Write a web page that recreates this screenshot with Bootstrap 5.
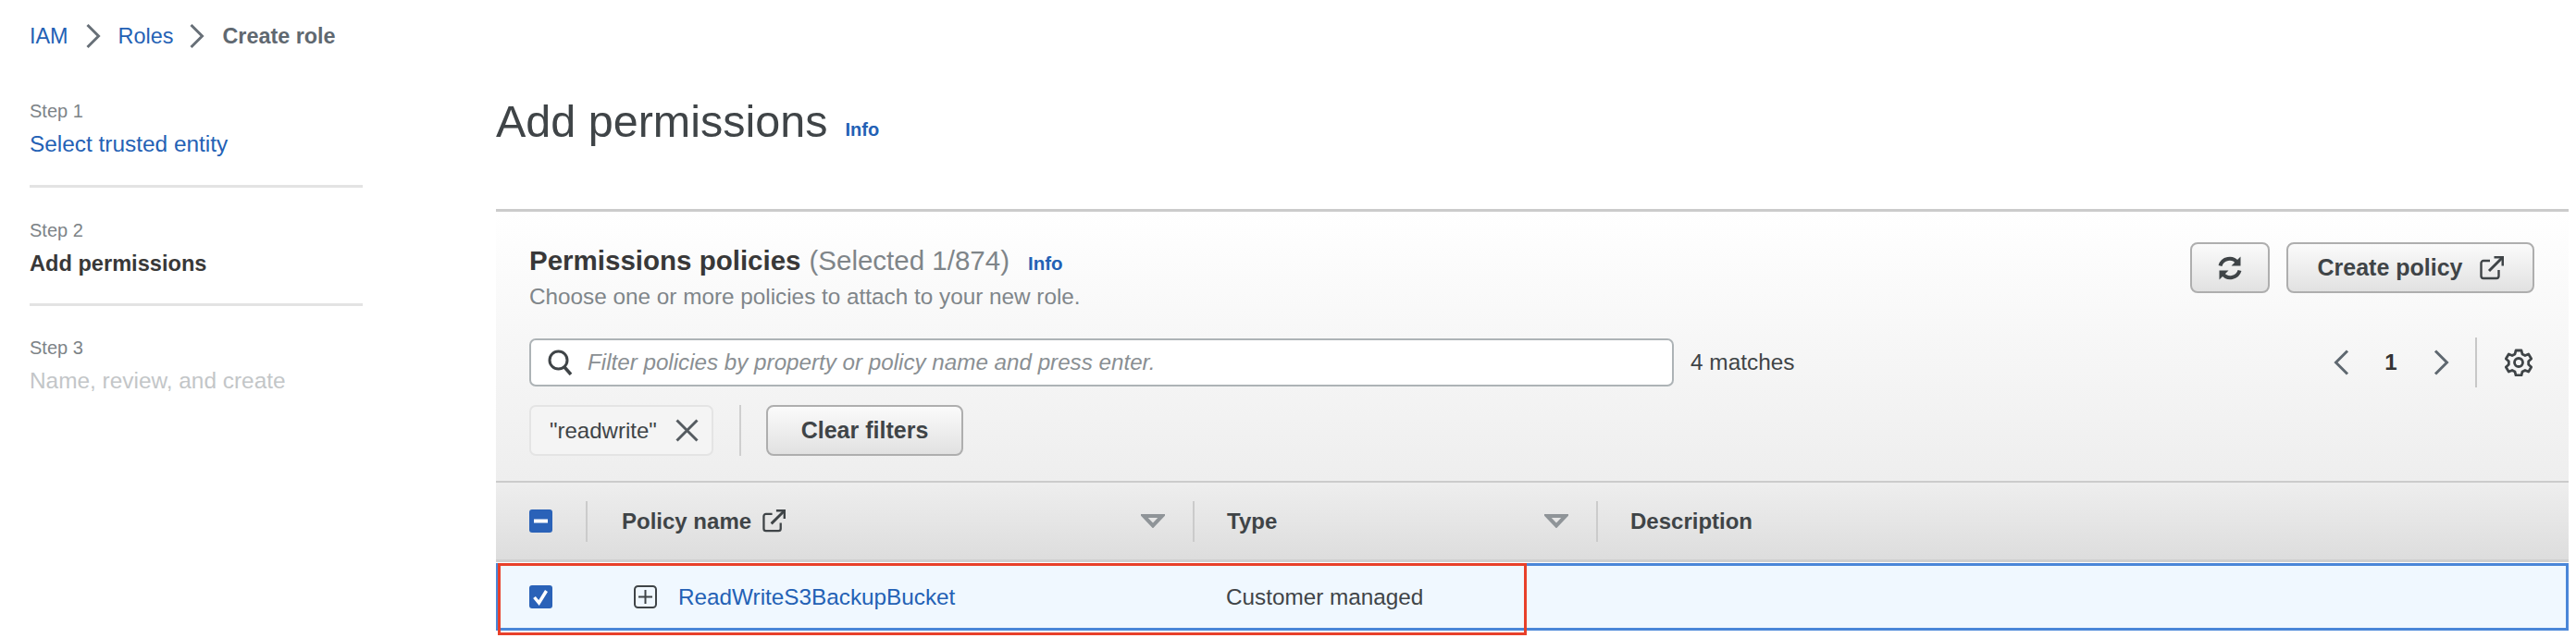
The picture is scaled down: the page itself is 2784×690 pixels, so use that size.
<!DOCTYPE html>
<html lang="en">
<head>
<meta charset="utf-8">
<title>Create role</title>
<link href="https://cdn.jsdelivr.net/npm/bootstrap@5.3.0/dist/css/bootstrap.min.css" rel="stylesheet">
<style>
html,body{height:690px;overflow:hidden}
body{background:#fff;color:#3f4447;font-family:"Liberation Sans",Arial,sans-serif;font-size:24px;line-height:32px}
a{color:#2361b5;text-decoration:none}
.crumbs{height:78px;padding:0 0 0 32px;margin:0;font-size:23.4px}
.crumbs a,.crumbs b{line-height:80px}
.crumbs b{color:#5f6870;font-weight:700;font-size:23.4px}
.chev{color:#687078;margin:0 19px}
.chev-b{margin-left:18px}
.shell{height:612px}
.sidebar{width:536px;padding-left:32px;flex:none}
.stepper{width:360px;margin:0;padding:0;list-style:none}
.stepper li{height:128px;padding-top:32px;border-bottom:3px solid #e3e3e3}
.stepper li:first-child{height:125px;padding-top:28px}
.stepper li:last-child{border:0;padding-top:31px}
.stepper small{display:block;font-size:20px;line-height:28px;color:#7d8387;margin-bottom:6px}
.stepper a,.stepper strong,.stepper .muted-step{font-size:24.4px}
.stepper strong{color:#383838;font-size:23.6px}
.muted-step{color:#c3c6c8}
.mainarea{margin-right:8px;min-width:0}
.pagehead{height:70px;gap:19px;margin-top:18px;margin-bottom:60px}
.pagehead h1{font-size:48.5px;line-height:70px;font-weight:400;margin:0;color:#3f4447}
.pagehead .infolink{margin-top:18px}
.infolink{font-size:20px;font-weight:700;color:#2361b5}
.panel{border-top:3px solid #cbcbcb;background:linear-gradient(#fff,#eee);height:294px;padding:34px 36px 0;position:relative}
.panel h2{font-size:29.5px;line-height:38px;font-weight:700;margin:0;color:#383838;display:flex;align-items:baseline}
.panel h2 span{font-weight:400;color:#7f8589;margin-left:9px}
.panel h2 a{margin-left:20px;font-size:20.5px}
.panel p{color:#80868a;margin:1px 0 0;font-size:24.3px;line-height:32px}
.topactions{position:absolute;right:37px;top:33px;gap:18px}
.greybtn{height:55px;background:linear-gradient(#fbfbfb,#e1e1e1);border:2px solid #aeaeae;border-radius:8px;color:#3f4447;font-size:25px;font-weight:700;line-height:1;padding:0;display:flex;align-items:center;justify-content:center}
.refresh{width:86px}
.createbtn{width:268px;gap:18px}
.filterrow{margin-top:29px;height:52px}
.searchbox{width:1237px;height:52px;background:#fff;border:2px solid #adb3b6;border-radius:7px;padding:0 18px;gap:16px}
.searchbox input{border:0;outline:0;background:transparent;width:100%;padding:0;font:italic 24.2px "Liberation Sans",Arial,sans-serif;color:#333}
.searchbox input::placeholder{color:#8a8f93;opacity:1}
.matchcount{margin-left:18px;color:#3f4447;font-size:24.4px}
.pager{margin-left:auto;margin-right:3px}
.pager b{width:40px;text-align:center;margin:0 26px 0 25px;font-size:24px;color:#333}
.pagerule{width:2px;height:54px;background:#c8c8c8;margin:0 30px 0 28px}
.tokenrow{margin-top:20px;height:55px}
.token{width:199px;height:55px;background:#f4f4f4;border:2px solid #e4e4e4;border-radius:7px;padding:0 14px 0 20px;justify-content:space-between}
.tokenrule{width:2px;height:55px;background:#cfcfcf;margin:0 27px 0 28px}
.clearbtn{width:213px;height:55px}
.thead{height:89px;border-top:3px solid #cbcbcb;border-bottom:3px solid #cfcfcf;background:linear-gradient(#eee,#ddd);margin-top:-1px}
.cell{height:100%;position:relative;display:flex;align-items:center}
.c1{width:97px;padding-left:36px}
.c2{width:654px;padding-left:37px}
.c3{width:434px;padding-left:35px}
.c4{padding-left:35px}
.thead .cell{font-weight:700;color:#3f4447}
.thead .c2,.thead .c3{justify-content:space-between;padding-right:30px}
.vrule{width:2px;height:44px;background:#cbcbcb;flex:none}
.titlegap{gap:12px}
.trow{height:73px;background:#f0f8ff;border:3px solid #4a86d8;border-left-width:2px;margin-top:1px;position:relative;font-size:24.3px}
.trow .c1{padding-left:34px;width:95px}
.trow .c2{width:657px;padding-left:52px;gap:23px}
.trow .c3{padding-left:35px;color:#3f4447}
.annot{position:absolute;left:0;top:-3px;width:1112px;height:78px;border:3px solid #e8402a;pointer-events:none}
svg{display:block;flex:none}
</style>
</head>
<body>
<nav class="crumbs d-flex align-items-center" aria-label="breadcrumb">
  <a href="#">IAM</a>
  <svg class="chev" width="16" height="28" viewBox="0 0 16 28" fill="none" stroke="currentColor" stroke-width="3"><path d="M1.5 2l12 12-12 12"/></svg>
  <a href="#">Roles</a>
  <svg class="chev chev-b" width="16" height="28" viewBox="0 0 16 28" fill="none" stroke="currentColor" stroke-width="3"><path d="M1.5 2l12 12-12 12"/></svg>
  <b>Create role</b>
</nav>
<div class="shell d-flex">
  <aside class="sidebar">
    <ul class="stepper">
      <li><small>Step 1</small><a href="#">Select trusted entity</a></li>
      <li><small>Step 2</small><strong>Add permissions</strong></li>
      <li><small>Step 3</small><span class="muted-step">Name, review, and create</span></li>
    </ul>
  </aside>
  <main class="mainarea flex-grow-1">
    <div class="pagehead d-flex align-items-center">
      <h1>Add permissions</h1><a class="infolink" href="#">Info</a>
    </div>
    <section class="panel">
      <h2>Permissions policies <span>(Selected 1/874)</span><a class="infolink" href="#">Info</a></h2>
      <p>Choose one or more policies to attach to your new role.</p>
      <div class="topactions d-flex">
        <button class="greybtn refresh" type="button" aria-label="Refresh">
          <svg width="28" height="28" viewBox="0 0 28 28" fill="none" stroke="#3f4447" stroke-width="4"><path d="M3.5 11.5A10.5 10.5 0 0 1 22 8"/><path d="M24.5 16.5A10.5 10.5 0 0 1 6 20"/><path d="M25.5 1.5v10h-10z" fill="#3f4447" stroke="none"/><path d="M2.5 26.5v-10h10z" fill="#3f4447" stroke="none"/></svg>
        </button>
        <button class="greybtn createbtn" type="button">Create policy
          <svg width="26" height="26" viewBox="0 0 26 26" fill="none" stroke="#3f4447" stroke-width="2.4"><path d="M11 5H4a2.5 2.5 0 0 0-2.5 2.5v14A2.500 2.500 0 0 0 4 24h14a2.500 2.500 0 0 0 2.500-2.500V15"/><path d="M10 16L24 2" stroke-width="3"/><path d="M15.500 1H25V10.500" stroke-width="3"/></svg>
        </button>
      </div>
      <div class="filterrow d-flex align-items-center">
        <div class="searchbox d-flex align-items-center">
          <svg width="27" height="28" viewBox="0 0 27 28" fill="none" stroke="#3f4447" stroke-width="3"><circle cx="11.500" cy="11.500" r="9.500"/><path d="M18 19l7 8" stroke-width="3.500"/></svg>
          <input type="text" placeholder="Filter policies by property or policy name and press enter.">
        </div>
        <span class="matchcount">4 matches</span>
        <div class="pager d-flex align-items-center">
          <svg width="17" height="28" viewBox="0 0 17 28" fill="none" stroke="#5f6870" stroke-width="3"><path d="M15 1.500L2.500 14 15 26.500"/></svg>
          <b>1</b>
          <svg width="17" height="28" viewBox="0 0 17 28" fill="none" stroke="#5f6870" stroke-width="3"><path d="M2 1.500L14.500 14 2 26.500"/></svg>
          <span class="pagerule"></span>
          <svg width="30" height="30" viewBox="0 0 30 30" fill="none" stroke="#3f4447" stroke-width="2.800"><path d="M12 2h6l1 4 3 1.500 3.700-1.500 3 5-3 2.700v3.600l3 2.700-3 5-3.700-1.500-3 1.500-1 4h-6l-1-4-3-1.500-3.700 1.500-3-5 3-2.700v-3.600l-3-2.700 3-5L8 7.500 11 6z" stroke-linejoin="round"/><circle cx="15" cy="15" r="4.500"/></svg>
        </div>
      </div>
      <div class="tokenrow d-flex align-items-center">
        <div class="token d-flex align-items-center"><span>"readwrite"</span>
          <svg width="25" height="25" viewBox="0 0 25 25" fill="none" stroke="#555b60" stroke-width="3"><path d="M1.500 1.500l22 22M23.500 1.500l-22 22"/></svg>
        </div>
        <span class="tokenrule"></span>
        <button class="greybtn clearbtn" type="button">Clear filters</button>
      </div>
    </section>
    <div class="thead d-flex">
      <div class="cell c1">
        <svg width="25" height="25" viewBox="0 0 25 25"><rect width="25" height="25" rx="3" fill="#2a62b8"/><rect x="5" y="10.500" width="15" height="4" fill="#fff"/></svg>
      </div>
      <span class="vrule align-self-center"></span>
      <div class="cell c2">
        <span class="d-flex align-items-center titlegap">Policy name
          <svg width="25" height="25" viewBox="0 0 26 26" fill="none" stroke="#3f4447" stroke-width="2.400"><path d="M11 5H4a2.500 2.500 0 0 0-2.500 2.500v14A2.500 2.500 0 0 0 4 24h14a2.500 2.500 0 0 0 2.500-2.500V15"/><path d="M10 16L24 2" stroke-width="3"/><path d="M15.500 1H25V10.500" stroke-width="3"/></svg>
        </span>
        <svg width="26" height="15" viewBox="0 0 26 15" fill="none" stroke="#8f9498" stroke-width="4"><path d="M3 2h20L13 12.500z"/></svg>
      </div>
      <span class="vrule align-self-center"></span>
      <div class="cell c3">Type
        <svg width="26" height="15" viewBox="0 0 26 15" fill="none" stroke="#8f9498" stroke-width="4"><path d="M3 2h20L13 12.500z"/></svg>
      </div>
      <span class="vrule align-self-center"></span>
      <div class="cell c4">Description</div>
    </div>
    <div class="trow d-flex">
      <div class="cell c1">
        <svg width="25" height="25" viewBox="0 0 25 25"><rect width="25" height="25" rx="3" fill="#2a62b8"/><path d="M5.500 13l5 6 8-13" fill="none" stroke="#fff" stroke-width="3.500"/></svg>
      </div>
      <div class="cell c2">
        <svg width="25" height="25" viewBox="0 0 25 25" fill="none" stroke="#3f4447" stroke-width="2"><rect x="1" y="1" width="23" height="23" rx="3.500"/><path d="M12.500 5v15M5 12.500h15"/></svg>
        <a href="#">ReadWriteS3BackupBucket</a>
      </div>
      <div class="cell c3">Customer managed</div>
      <div class="annot"></div>
    </div>
  </main>
</div>
</body>
</html>
